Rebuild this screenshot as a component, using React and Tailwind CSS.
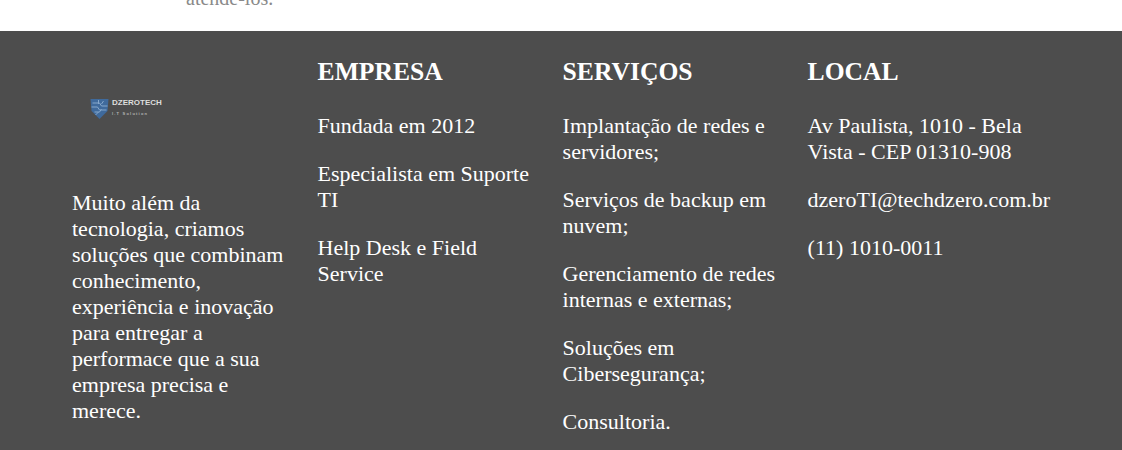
export default function App() {
  const P = ({ children }) => <p className="mb-[22px] leading-[26px]">{children}</p>;
  return (
    <div className="h-[450px] w-[1122px] overflow-hidden bg-white font-['Liberation_Serif',serif] text-[22px]">
      <div className="h-[31px] overflow-hidden pl-[186px]">
        <p className="-mt-[15px] text-[20px] leading-[26px] text-[#8a8a8a]">atende-los.</p>
      </div>
      <footer className="h-[419px] bg-[#4d4d4d] pl-[72px] pt-[25px] text-white">
        <div className="grid grid-cols-[245.6px_245px_245px_245px]">
          <div className="w-[215px]">
            <div className="flex h-[134px] items-start pl-[17px] pt-[41px]">
              <svg width="21" height="24" viewBox="0 0 20 24">
                <path d="M1 2h18l-1 12-8 8-8-8z" fill="#3f6a9c" />
                <path d="M3 6h7l2 3h6M2 10h6l2 3h7M5 15h5l2-3M9 3v4M14 4l-2 3M6 18l3-3" stroke="#86a8cc" strokeWidth="1" fill="none" />
              </svg>
              <div className="ml-[2px] mt-[1px] flex flex-col font-['Liberation_Sans',sans-serif]">
                <span className="text-[8px] font-bold leading-[10px] text-[#dddddd]">DZEROTECH</span>
                <span className="mt-[3px] text-[4px] font-bold leading-[6px] tracking-[1.2px] text-[#b5b5b5]">I.T Solution</span>
              </div>
            </div>
            <p className="leading-[26px]">
              Muito além da tecnologia, criamos soluções que combinam conhecimento, experiência e inovação para entregar a performace que a sua empresa precisa e merece.
            </p>
          </div>
          <div className="w-[215px]">
            <h3 className="mb-[25px] text-[25.6px] font-bold leading-[32px]">EMPRESA</h3>
            <P>Fundada em 2012</P>
            <P>Especialista em Suporte TI</P>
            <P>Help Desk e Field Service</P>
          </div>
          <div className="w-[215px]">
            <h3 className="mb-[25px] text-[25.6px] font-bold leading-[32px]">SERVIÇOS</h3>
            <P>Implantação de redes e servidores;</P>
            <P>Serviços de backup em nuvem;</P>
            <P>Gerenciamento de redes internas e externas;</P>
            <P>Soluções em Cibersegurança;</P>
            <P>Consultoria.</P>
          </div>
          <div className="w-[250px]">
            <h3 className="mb-[25px] text-[25.6px] font-bold leading-[32px]">LOCAL</h3>
            <div className="w-[225px]"><P>Av Paulista, 1010 - Bela Vista - CEP 01310-908</P></div>
            <P>dzeroTI@techdzero.com.br</P>
            <P>(11) 1010-0011</P>
          </div>
        </div>
      </footer>
    </div>
  );
}
